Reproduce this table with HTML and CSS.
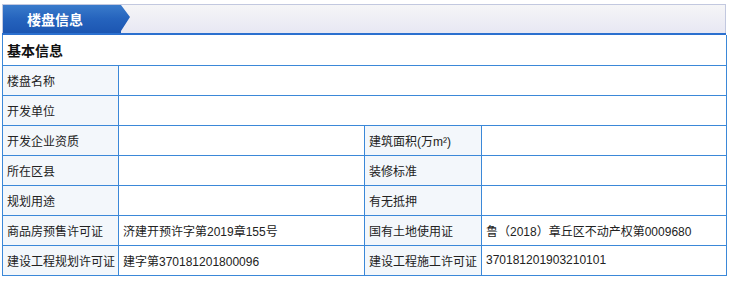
FILE: index.html
```html
<!DOCTYPE html>
<html lang="zh">
<head>
<meta charset="utf-8">
<link rel="stylesheet" href="styles.css">
</head>
<body>
<div class="panel">
  <div class="panel-head">
    <div class="tab"><span>楼盘信息</span></div>
  </div>
  <div class="bluebar"></div>
  <table class="info">
    <colgroup>
      <col class="c1"><col class="c2"><col class="c3"><col class="c4">
    </colgroup>
    <tr><td colspan="4" class="title">基本信息</td></tr>
    <tr><td class="lbl">楼盘名称</td><td colspan="3"></td></tr>
    <tr><td class="lbl">开发单位</td><td colspan="3"></td></tr>
    <tr><td class="lbl">开发企业资质</td><td></td><td class="lbl">建筑面积(万m²)</td><td></td></tr>
    <tr><td class="lbl">所在区县</td><td></td><td class="lbl">装修标准</td><td></td></tr>
    <tr><td class="lbl">规划用途</td><td></td><td class="lbl">有无抵押</td><td></td></tr>
    <tr><td class="lbl">商品房预售许可证</td><td>济建开预许字第2019章155号</td><td class="lbl">国有土地使用证</td><td>鲁（2018）章丘区不动产权第0009680</td></tr>
    <tr><td class="lbl">建设工程规划许可证</td><td>建字第370181201800096</td><td class="lbl">建设工程施工许可证</td><td>370181201903210101</td></tr>
  </table>
</div>
</body>
</html>
```
FILE: styles.css
```css
html, body {
  margin: 0;
  padding: 0;
  background: #fff;
}
body {
  font-family: "Liberation Sans", "Noto Sans CJK SC", sans-serif;
  font-size: 12px;
  color: #222;
}
.panel {
  margin: 4px 0 0 2px;
  width: 724px;
}
.panel-head {
  height: 28px;
  border: 1px solid #c2c8df;
  border-bottom: none;
  background: linear-gradient(to bottom, #f5f5f7, #e7e7f3);
  box-sizing: content-box;
  display: flex;
}
.tab {
  width: 128px;
  height: 28px;
  background: linear-gradient(to bottom, #3a7bcb 0%, #2563bd 50%, #1c56b2 100%);
  clip-path: polygon(0 0, 118px 0, 127px 12px, 118px 26px, 118px 28px, 0 28px);
  display: flex;
  align-items: center;
}
.tab span {
  margin-left: 24px;
  color: #fff;
  font-weight: bold;
  font-size: 14px;
  font-family: "Noto Sans CJK SC", sans-serif;
}
.bluebar {
  height: 2px;
  background: #2b70cf;
}
.info {
  border-collapse: collapse;
  width: 724px;
  table-layout: fixed;
}
.info col.c1 { width: 116px; }
.info col.c2 { width: 246px; }
.info col.c3 { width: 117px; }
.info col.c4 { width: 245px; }
.info td {
  border: 1px solid #3b88d8;
  height: 30px;
  padding: 0 4px;
  box-sizing: border-box;
  white-space: nowrap;
  vertical-align: middle;
  color: #222;
}
.info tr:first-child td { border-top: none; }
.info td.lbl {
  background: #f3f7fb;
}
.info td.title {
  font-weight: bold;
  font-size: 14px;
  font-family: "Noto Sans CJK SC", sans-serif;
  color: #111;
  height: 30px;
}
```
